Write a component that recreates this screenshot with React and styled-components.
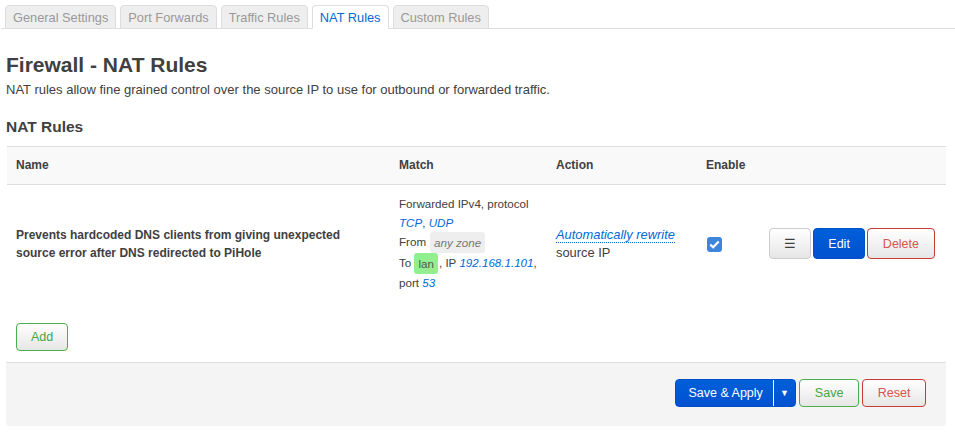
import React from 'react'
import styled, { createGlobalStyle } from 'styled-components'

const GlobalStyle = createGlobalStyle`
  body {
    margin: 0;
    background: #fff;
    color: #404040;
    font-family: "Liberation Sans", Arial, sans-serif;
    font-size: 12px;
  }
`

const Page = styled.div`
  padding: 5px 9px 0 6px;
`

const TabBar = styled.ul`
  display: flex;
  gap: 4px;
  list-style: none;
  margin: 0 -9px 0 -5px;
  padding: 0 0 0 4px;
  border-bottom: 1px solid #ddd;
`

const Tab = styled.li`
  height: 24px;
  margin-bottom: -1px;
  padding: 0 7px;
  box-sizing: border-box;
  display: flex;
  align-items: center;
  font-size: 12.8px;
  border: 1px solid #ddd;
  border-bottom-color: ${({ active }) => (active ? '#fff' : '#ddd')};
  border-radius: 4px 4px 0 0;
  background: ${({ active }) => (active ? '#fff' : '#eee')};
  color: ${({ active }) => (active ? '#0069d6' : '#999')};
`

const Title = styled.h1`
  margin: 23px 0 0;
  font-size: 21px;
  line-height: 26px;
  font-weight: bold;
  color: #404040;
`

const Description = styled.p`
  margin: 3px 0 0;
  line-height: 18px;
  font-size: 13px;
`

const SectionTitle = styled.h3`
  margin: 18px 0 0;
  font-size: 15.5px;
  line-height: 20px;
  font-weight: bold;
`

const Table = styled.table`
  margin: 9px 0 0 1px;
  width: calc(100% - 1px);
  border-collapse: collapse;
  table-layout: fixed;
`

const HeadCell = styled.th`
  width: ${({ w }) => w || 'auto'};
  text-align: left;
  font-weight: bold;
  background: #f9f9f9;
  border-top: 1px solid #ddd;
  border-bottom: 1px solid #ddd;
  padding: 9px 9px 10px;
  line-height: 18px;
`

const Cell = styled.td`
  padding: 10px 9px 10px;
  vertical-align: middle;
  line-height: 18px;
  font-size: ${({ size }) => size || '12px'};
  font-weight: ${({ bold }) => (bold ? 'bold' : 'normal')};
`

const MatchLine = styled.div`
  line-height: 18.6px;
  white-space: nowrap;
`

const Link = styled.span`
  color: #0069d6;
  font-style: italic;
`

const Badge = styled.span`
  display: inline-block;
  vertical-align: middle;
  line-height: 17px;
  padding: 2px 4px;
  border-radius: 3px;
  background: ${({ green }) => (green ? '#90f090' : '#eee')};
  color: ${({ green }) => (green ? '#555' : '#777')};
  font-style: ${({ green }) => (green ? 'normal' : 'italic')};
  margin: ${({ green }) => (green ? '0 1px 0 0' : '0 0 0 4px')};
`

const Rewrite = styled.span`
  color: #0069d6;
  font-style: italic;
  border-bottom: 1px dotted #0069d6;
`

const Check = styled.span`
  display: inline-flex;
  align-items: center;
  justify-content: center;
  width: 15px;
  height: 15px;
  border-radius: 3px;
  background: #3d86dc;
  margin-left: 1px;
  vertical-align: middle;
`

const ButtonRow = styled.div`
  display: flex;
  justify-content: flex-end;
  gap: 2px;
  padding-right: 2px;
`

const colors = {
  neutral: { border: '#ccc', text: '#404040' },
  green: { border: '#4cae4c', text: '#46a546' },
  red: { border: '#c43c35', text: '#d9534f' },
}

const Button = styled.button`
  height: ${({ tall }) => (tall ? '31px' : '28px')};
  padding: 0 ${({ pad }) => pad || '15px'};
  font-family: inherit;
  font-size: 12.5px;
  border-radius: 4px;
  border: 1px solid ${({ kind }) => (kind === 'blue' ? '#0050c8' : colors[kind].border)};
  color: ${({ kind }) => (kind === 'blue' ? '#fff' : colors[kind].text)};
  background: ${({ kind }) =>
    kind === 'blue' ? 'linear-gradient(#005fd9, #0051d0)' : 'linear-gradient(#fff, #e6e6e6)'};
  cursor: pointer;
`

const AddRow = styled.div`
  padding: 20px 0 11px 10px;
`

const Footer = styled.div`
  background: #f4f4f4;
  border-top: 1px solid #ddd;
  border-radius: 0 0 3px 3px;
  padding: 16px 20px 19px;
  display: flex;
  justify-content: flex-end;
  gap: 3px;
`

const SplitButton = styled.div`
  display: flex;
  height: 28px;
  box-sizing: border-box;
  border-radius: 4px;
  border: 1px solid #0050c8;
  background: linear-gradient(#005fd9, #0051d0);
  color: #fff;
  font-size: 12.5px;
  overflow: hidden;
`

const SplitMain = styled.span`
  display: flex;
  align-items: center;
  padding: 0 10px 0 12px;
  border-right: 1px solid #fff;
`

const SplitArrow = styled.span`
  display: flex;
  align-items: center;
  justify-content: center;
  width: 21px;
  font-size: 9px;
`

export default function App() {
  const tabs = ['General Settings', 'Port Forwards', 'Traffic Rules', 'NAT Rules', 'Custom Rules']
  return (
    <Page>
      <GlobalStyle />
      <TabBar>
        {tabs.map((t) => (
          <Tab key={t} active={t === 'NAT Rules'}>
            {t}
          </Tab>
        ))}
      </TabBar>

      <Title>Firewall - NAT Rules</Title>
      <Description>
        NAT rules allow fine grained control over the source IP to use for outbound or forwarded traffic.
      </Description>

      <SectionTitle>NAT Rules</SectionTitle>
      <Table>
        <thead>
          <tr>
            <HeadCell w="365px">Name</HeadCell>
            <HeadCell w="139px">Match</HeadCell>
            <HeadCell w="132px">Action</HeadCell>
            <HeadCell w="46px">Enable</HeadCell>
            <HeadCell />
          </tr>
        </thead>
        <tbody>
          <tr>
            <Cell bold>
              Prevents hardcoded DNS clients from giving unexpected source error after DNS redirected to PiHole
            </Cell>
            <Cell size="11.6px">
              <MatchLine>Forwarded IPv4, protocol</MatchLine>
              <MatchLine>
                <Link>TCP</Link>, <Link>UDP</Link>
              </MatchLine>
              <MatchLine>
                From<Badge>any zone</Badge>
              </MatchLine>
              <MatchLine>
                To <Badge green>lan</Badge>, IP <Link>192.168.1.101</Link>,
              </MatchLine>
              <MatchLine>
                port <Link>53</Link>
              </MatchLine>
            </Cell>
            <Cell size="12.9px">
              <Rewrite>Automatically rewrite</Rewrite>
              <br />
              source IP
            </Cell>
            <Cell>
              <Check>
                <svg width="11" height="9" viewBox="0 0 11 9">
                  <path d="M1.3 4.6 L4.2 7.3 L9.7 1.6" fill="none" stroke="#fff" strokeWidth="2.2" />
                </svg>
              </Check>
            </Cell>
            <Cell>
              <ButtonRow>
                <Button kind="neutral" tall pad="14px">☰</Button>
                <Button kind="blue" tall pad="14px">Edit</Button>
                <Button kind="red" tall>Delete</Button>
              </ButtonRow>
            </Cell>
          </tr>
        </tbody>
      </Table>

      <AddRow>
        <Button kind="green" pad="14px">Add</Button>
      </AddRow>

      <Footer>
        <SplitButton>
          <SplitMain>Save &amp; Apply</SplitMain>
          <SplitArrow>▼</SplitArrow>
        </SplitButton>
        <Button kind="green">Save</Button>
        <Button kind="red" pad="14.5px">Reset</Button>
      </Footer>
    </Page>
  )
}
